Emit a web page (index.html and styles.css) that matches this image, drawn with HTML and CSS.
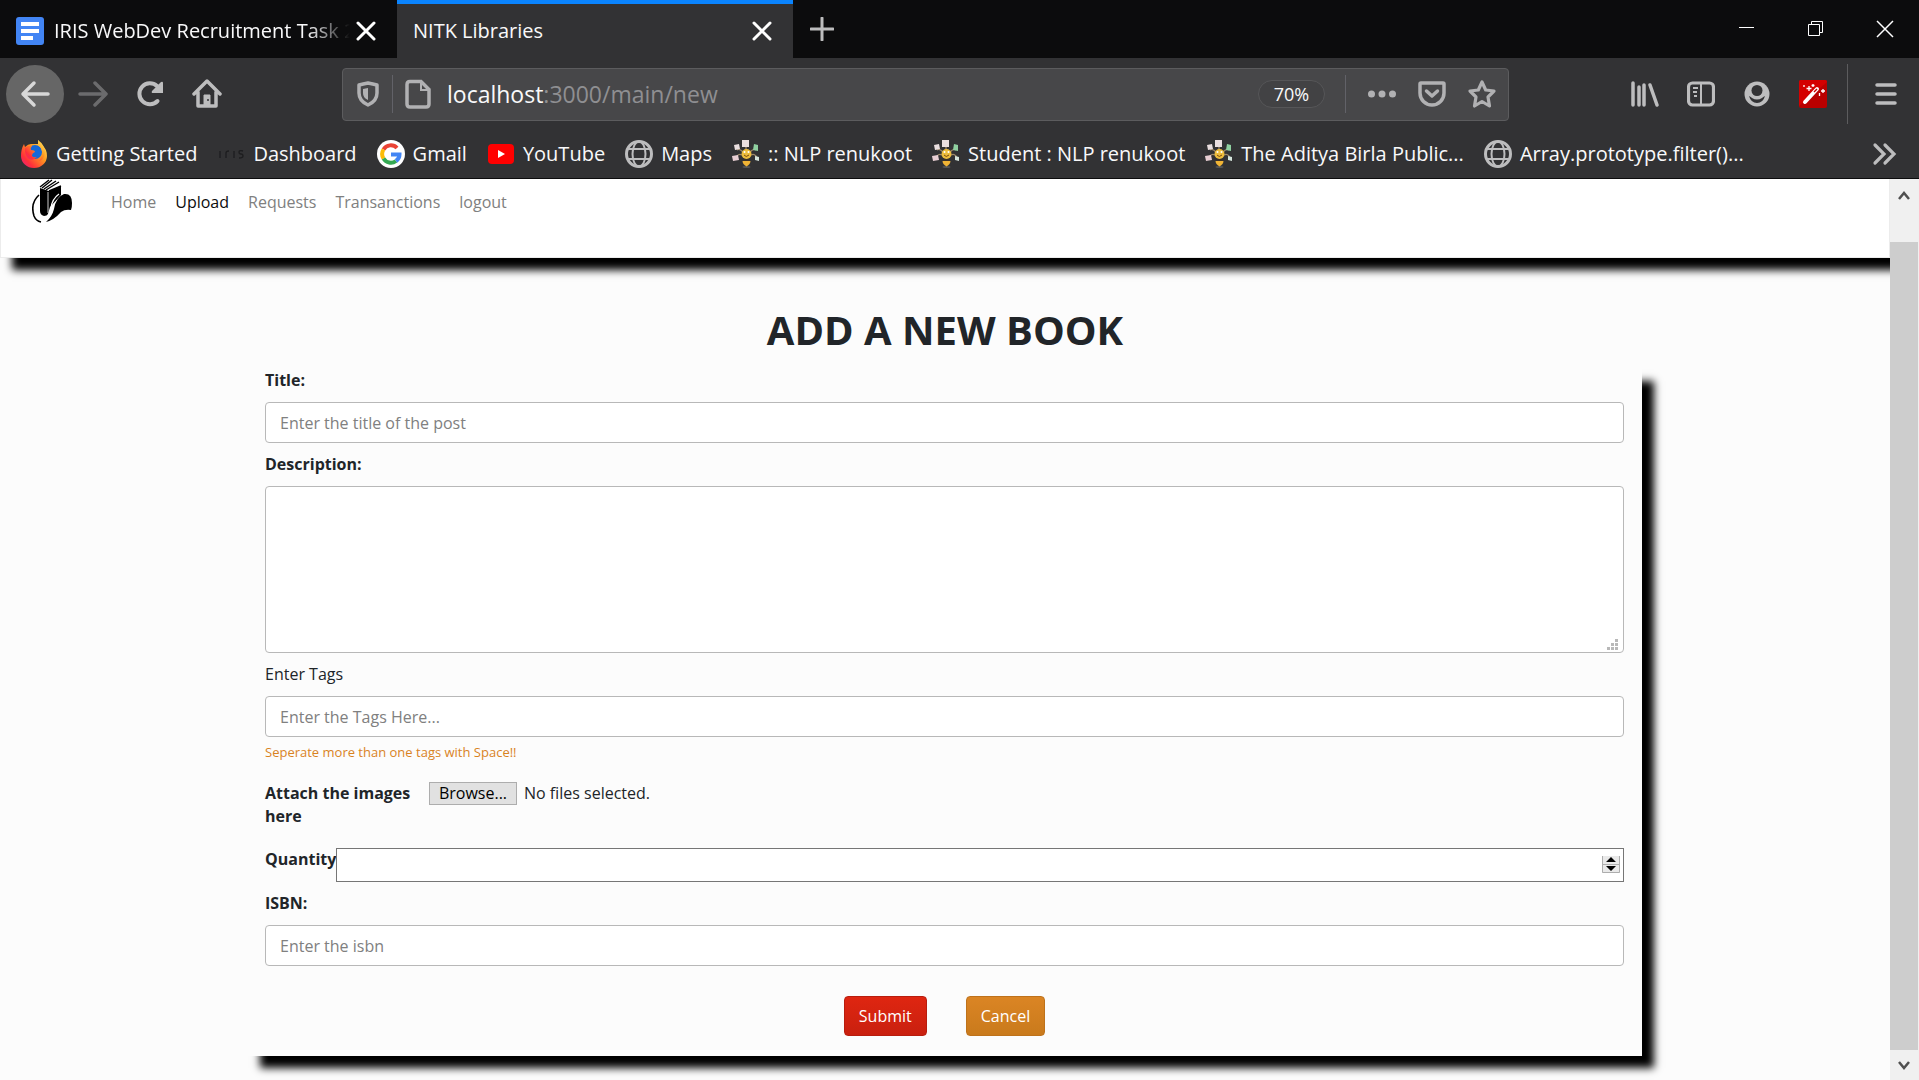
FILE: index.html
```html
<!DOCTYPE html>
<html lang="en">
<head>
<meta charset="utf-8">
<title>NITK Libraries</title>
<link rel="stylesheet" href="styles.css">
</head>
<body>
<svg class="defs" aria-hidden="true">
  <symbol id="i-close" viewBox="0 0 20 20"><path d="M2 2l16 16M18 2L2 18" stroke="#fff" stroke-width="3" stroke-linecap="round"/></symbol>
  <symbol id="i-globe" viewBox="0 0 28 28"><g fill="none" stroke="#bdbdbe" stroke-width="2"><circle cx="14" cy="14" r="12.5" stroke-width="3"/><ellipse cx="14" cy="14" rx="6.5" ry="12.5"/><path d="M3 9h22M3 19h22"/></g></symbol>
  <symbol id="i-bee" viewBox="0 0 28 28">
    <ellipse cx="14.500" cy="27" rx="4" ry="1" fill="#555"/>
    <g fill="none" stroke="#a08b6c" stroke-width="1.300"><path d="M11 12Q7 8 5 10M18 12Q22 8 24 10M10 15Q6 13 4 18M19 15Q23 13 25 18M14 10V6"/></g>
    <path d="M10 0h7v7h-7zM2 5l5-1 1 5-5 1z" fill="#eadfe0"/><path d="M22 4l4 1v6l-5-1z" fill="#8fd0a0"/><path d="M0 16l6-1 1 5-6 1z" fill="#e8ced3"/><path d="M23 16l4 1v4l-4-1z" fill="#d5e4dc"/>
    <circle cx="14.500" cy="14" r="5" fill="#eebd3c"/><path d="M12 15q2 3 5 0" stroke="#7a4a10" fill="none"/><circle cx="12.500" cy="12" r="1" fill="#fff"/><circle cx="16.500" cy="12" r="1" fill="#fff"/>
    <path d="M11 19h7v2h-7z" fill="#393028"/><path d="M10.500 21h8q0 3-4 5.500-4-2.500-4-5.500z" fill="#f0b435"/>
  </symbol>
</svg>

<header class="chrome">
  <div class="tabs">
    <div class="tab">
      <svg class="docs" viewBox="0 0 28 28"><rect width="28" height="28" rx="3" fill="#4285f4"/><path d="M5 5h18v4H5zM5 12h18v4H5zM5 19h12v4H5z" fill="#fff"/></svg>
      <span class="tab-title fade">IRIS WebDev Recruitment Task 2</span>
      <button class="tab-close" aria-label="Close tab"><svg viewBox="0 0 20 20"><use href="#i-close"/></svg></button>
    </div>
    <div class="tab active">
      <span class="tab-title">NITK Libraries</span>
      <button class="tab-close" aria-label="Close tab"><svg viewBox="0 0 20 20"><use href="#i-close"/></svg></button>
    </div>
    <button class="new-tab" aria-label="New tab"><svg viewBox="0 0 24 24"><path d="M12 1v22M1 12h22" stroke="#bdbdbe" stroke-width="3" stroke-linecap="round"/></svg></button>
    <div class="window-buttons">
      <button aria-label="Minimize"><svg viewBox="0 0 18 18"><path d="M1 7.500h15" stroke="#fff"/></svg></button>
      <button aria-label="Restore"><svg viewBox="0 0 18 18"><path d="M1.500 4.500h11v11h-11zM4.500 4V1.500h11v11H13" stroke="#fff" fill="none"/></svg></button>
      <button aria-label="Close window"><svg viewBox="0 0 18 18"><path d="M1 1l16 16M17 1L1 17" stroke="#fff" stroke-width="1.500"/></svg></button>
    </div>
  </div>

  <div class="toolbar">
    <div class="nav-buttons">
      <button class="back" aria-label="Back"><svg viewBox="0 0 30 30"><path d="M28 15H3M14 4L3 15l11 11" fill="none" stroke="#d8d8d8" stroke-width="3.500" stroke-linecap="round" stroke-linejoin="round"/></svg></button>
      <button aria-label="Forward"><svg viewBox="0 0 30 30"><path d="M2 15h26M17 4l11 11-11 11" fill="none" stroke="#6b6b6d" stroke-width="3.500" stroke-linecap="round" stroke-linejoin="round"/></svg></button>
      <button aria-label="Reload"><svg viewBox="0 0 30 30"><path d="M22.500 22A10.500 10.500 0 1 1 22 7l3 3" fill="none" stroke="#bdbdbe" stroke-width="4" stroke-linecap="round"/><path d="M26 3q2-1 2 1v10H18q-2 0-1-2z" fill="#bdbdbe"/></svg></button>
      <button aria-label="Home"><svg viewBox="0 0 30 30"><path d="M2 15L15 2l13 13M6 13v14h18V13" fill="none" stroke="#bdbdbe" stroke-width="3.500" stroke-linecap="round" stroke-linejoin="round"/><path d="M12 27V16h6v11z" fill="#bdbdbe" stroke="#bdbdbe"/><circle cx="16" cy="21" r="1" fill="#323234"/></svg></button>
    </div>
    <div class="urlbar">
      <svg class="shield" viewBox="0 0 24 28"><path d="M12 3q5 1 9 2v8q0 8-9 12-9-4-9-12V5q4-1 9-2z" fill="none" stroke="#b1b1b3" stroke-width="3.500" stroke-linejoin="round"/><path d="M12 8v12q-5-2-5-7V9z" fill="#b1b1b3"/></svg>
      <span class="url-rule"></span>
      <svg class="page-icon" viewBox="0 0 26 30"><path d="M5 2.500h11l8 8V25q0 3-3 3H5q-3 0-3-3V5.500q0-3 3-3z" fill="none" stroke="#b1b1b3" stroke-width="3.500"/><path d="M16 3v8h8" fill="none" stroke="#b1b1b3" stroke-width="2"/></svg>
      <div class="url"><b>localhost</b>:3000/main/new</div>
      <button class="zoom">70%</button>
      <span class="url-rule"></span>
      <div class="url-actions">
        <button aria-label="Page actions"><svg viewBox="0 0 30 30"><g fill="#b1b1b3"><circle cx="4.500" cy="15" r="3.500"/><circle cx="15" cy="15" r="3.500"/><circle cx="25.500" cy="15" r="3.500"/></g></svg></button>
        <button aria-label="Save to Pocket"><svg viewBox="0 0 30 30"><path d="M4 4h22q1 0 1 1v9a12 12 0 0 1-24 0V5q0-1 1-1zM9.500 12l5.500 5 5.500-5" fill="none" stroke="#b1b1b3" stroke-width="3.500" stroke-linecap="round" stroke-linejoin="round"/></svg></button>
        <button aria-label="Bookmark this page"><svg viewBox="0 0 30 30"><path d="M15 3l3.700 8 8.300 1-6 6 1.500 9-7.500-4.500L7.500 27 9 18l-6-6 8.300-1z" fill="none" stroke="#b1b1b3" stroke-width="3.200" stroke-linejoin="round"/></svg></button>
      </div>
    </div>
    <div class="tools">
      <button aria-label="Library"><svg viewBox="0 0 28 28"><path d="M2 3v22M8 7v18M13 5v20M19 5l7 20" fill="none" stroke="#bdbdbe" stroke-width="3.500" stroke-linecap="round"/></svg></button>
      <button aria-label="Sidebars"><svg viewBox="0 0 28 28"><rect x="1.500" y="3" width="25" height="22" rx="4" fill="none" stroke="#bdbdbe" stroke-width="3.200"/><path d="M14 4v20M6 8h5M6 12h4M7 16h3" stroke="#bdbdbe" stroke-width="2"/></svg></button>
      <button aria-label="Account"><svg viewBox="0 0 28 28"><circle cx="14" cy="14" r="12.500" fill="#bdbdbe"/><circle cx="14" cy="10.500" r="5.500" fill="#323234"/><path d="M6 16q2 1 3 2 5 3 10 0 1-1 3-2-2 7-8 7t-8-7z" fill="#323234"/></svg></button>
      <button aria-label="Magic wand"><svg viewBox="0 0 28 28"><rect width="28" height="28" rx="2" fill="#b90000"/><path d="M2 0h24q2 0 2 2L0 26V2q0-2 2-2z" fill="#d40000"/><path d="M6 22L18 9" stroke="#fff" stroke-width="4" stroke-linecap="round"/><path d="M15 12l3-3" stroke="#c80000" stroke-width="1.500"/><path d="M10 6v5M7.500 8.500h5M14 4v3M12.500 5.500h3M24 9v4M22 11h4M20.500 13v3M5 5v2" stroke="#fff" stroke-width="1.300"/></svg></button>
    </div>
    <div class="menu"><button aria-label="Open menu"><svg viewBox="0 0 28 28"><path d="M5 5h18M5 14h18M5 23h18" stroke="#bdbdbe" stroke-width="3.500" stroke-linecap="round"/></svg></button></div>
  </div>

  <nav class="bookmarks" aria-label="Bookmarks">
    <a href="#"><svg viewBox="0 0 28 28"><defs><linearGradient id="fx" x1="1" y1="0" x2="0" y2="1"><stop offset="0" stop-color="#fff36b"/><stop offset=".4" stop-color="#ff9a1f"/><stop offset=".75" stop-color="#ff2f3a"/><stop offset="1" stop-color="#e0208a"/></linearGradient></defs><path d="M18 0q1 3 4 5 5 4 5 11a13 12 0 0 1-26 0q0-7 3-12l1 3q3-3 6-3h7z" fill="url(#fx)"/><circle cx="15" cy="12" r="7" fill="#1568d8"/><path d="M5 8q4-3 7-2-2 2-1 4 4 0 4 2-3 1-3 4 2 2 5 1-4 4-8 2-5-4-4-11zM18 0q7 5 7 13-1 7-6 8 4-5 3-10-1-4-4-6z" fill="url(#fx)"/></svg>Getting Started</a>
    <a href="#"><svg viewBox="0 0 28 28"><path d="M3 11v7M9 18v-5q0-2 3-2M17 11v7M26 11q-4-1-4 1t2 2 2 2-4 2" fill="none" stroke="#1d1d1f" stroke-width="1.300"/></svg>Dashboard</a>
    <a href="#"><svg viewBox="0 0 28 28"><circle cx="14" cy="14" r="14" fill="#fff"/><g fill="none" stroke-width="4"><path d="M6.500 9.500A8.500 8.500 0 0 1 20 8" stroke="#ea4335"/><path d="M6.500 18.500a8.500 8.500 0 0 1 0-9" stroke="#fbbc05"/><path d="M6.500 18.500A8.500 8.500 0 0 0 19 21" stroke="#34a853"/><path d="M14 14.500h8.500q0 4-3.500 6.500" stroke="#4285f4"/></g></svg>Gmail</a>
    <a href="#"><svg viewBox="0 0 28 28"><rect x="1" y="4" width="26" height="20" rx="4" fill="#f00"/><path d="M11 10l7 4-7 4z" fill="#fff"/></svg>YouTube</a>
    <a href="#"><svg viewBox="0 0 28 28"><use href="#i-globe"/></svg>Maps</a>
    <a href="#"><svg viewBox="0 0 28 28"><use href="#i-bee"/></svg>:: NLP renukoot</a>
    <a href="#"><svg viewBox="0 0 28 28"><use href="#i-bee"/></svg>Student : NLP renukoot</a>
    <a href="#"><svg viewBox="0 0 28 28"><use href="#i-bee"/></svg>The Aditya Birla Public...</a>
    <a href="#"><svg viewBox="0 0 28 28"><use href="#i-globe"/></svg>Array.prototype.filter()...</a>
    <button class="more" aria-label="More bookmarks"><svg viewBox="0 0 28 28"><path d="M4 5l9 9-9 9M14 5l9 9-9 9" fill="none" stroke="#bdbdbe" stroke-width="3.200" stroke-linecap="round"/></svg></button>
  </nav>
</header>

<div class="viewport">
  <main class="page">
    <nav class="site-nav">
      <a class="brand" href="#" aria-label="NITK Libraries"><svg viewBox="0 0 40 44"><path d="M8 9v23q0 4 4 5 3 0 4-2l2-7 11-12V7L17 12z" fill="#000"/><path d="M8 8l11-7 10 3v3L17 12z" fill="#fff"/><path d="M8 8l9-7M10 9l10-8M12 10l12-8M14 11L27 3M17 12l12-5" fill="none" stroke="#000" stroke-width="1.400"/><path d="M16 13v21" stroke="#fff" stroke-width=".8"/><path d="M14 43q6-5 8-13 2-12 10-15 8-1 8 9 0 5-1 7-6-1-10 2-7 8-15 10z" fill="#000"/><path d="M7 16Q-2 24 2 37q2 5 7 6" fill="none" stroke="#000" stroke-width="1.600"/><path d="M27 15q-7 5-8 14-1 5-3 8" fill="none" stroke="#fff" stroke-width="1.200"/></svg></a>
      <a href="#">Home</a>
      <a class="current" href="#">Upload</a>
      <a href="#">Requests</a>
      <a href="#">Transanctions</a>
      <a href="#">logout</a>
    </nav>

    <h1>ADD A NEW BOOK</h1>

    <form class="card" onsubmit="return false">
      <label class="strong" for="title">Title:</label>
      <input class="field" id="title" type="text" placeholder="Enter the title of the post">
      <label class="strong" for="description">Description:</label>
      <div class="area">
        <textarea class="field" id="description"></textarea>
        <svg class="grip" viewBox="0 0 11 11"><path d="M8 0h3v3H8zM4 4h3v3H4zM8 4h3v3H8zM0 8h3v3H0zM4 8h3v3H4zM8 8h3v3H8z" fill="#b8b8b8"/></svg>
      </div>
      <label for="tags">Enter Tags</label>
      <input class="field" id="tags" type="text" placeholder="Enter the Tags Here...">
      <small>Seperate more than one tags with Space!!</small>
      <div class="attach">
        <label class="strong" for="images">Attach the images here</label>
        <div class="picker">
          <span class="browse">Browse...</span>
          <span>No files selected.</span>
          <input id="images" type="file" multiple>
        </div>
      </div>
      <div class="quantity">
        <label class="strong" for="quantity">Quantity</label>
        <div class="number">
          <input id="quantity" type="number">
          <svg class="spinner" viewBox="0 0 18 17"><rect width="18" height="17" fill="#e9e9e9"/><path d="M.500 0v16.500h17V0M0 8.500h18" fill="none" stroke="#adadad"/><path d="M4 6l5-5 5 5zM4 10h10l-5 5z" fill="#000"/></svg>
        </div>
      </div>
      <label class="strong" for="isbn">ISBN:</label>
      <input class="field" id="isbn" type="text" placeholder="Enter the isbn">
      <div class="actions">
        <button class="btn submit" type="submit">Submit</button>
        <button class="btn cancel" type="button">Cancel</button>
      </div>
    </form>
  </main>

  <div class="scrollbar" aria-hidden="true">
    <svg viewBox="0 0 14 14"><path d="M2 10l5-6 5 6" fill="none" stroke="#505050" stroke-width="2.500"/></svg>
    <div class="thumb"></div>
    <svg viewBox="0 0 14 14"><path d="M2 4l5 6 5-6" fill="none" stroke="#505050" stroke-width="2.500"/></svg>
  </div>
</div>
</body>
</html>
```
FILE: styles.css
```css
* { box-sizing: border-box; }
body {
  margin: 0;
  min-height: 100vh;
  display: flex;
  flex-direction: column;
  background: #fcfcfc;
  color: #212529;
  font: 16px/23px "Open Sans", "Noto Sans", sans-serif;
}
button { padding: 0; border: 0; background: none; font: inherit; color: inherit; }
a { color: inherit; text-decoration: none; }
svg { display: block; flex: none; }
.defs { display: none; }

/* Browser window */
.chrome {
  background: #323234;
  border-bottom: 1px solid #0c0c0d;
  color: #f9f9fa;
  font: 20px/28px "Open Sans", "Noto Sans", sans-serif;
}
.tabs { display: flex; height: 58px; background: #0c0c0d; }
.tab {
  display: flex;
  align-items: center;
  width: 397px;
  padding: 4px 21px 0 16px;
}
.tab.active { width: 396px; background: #323234; border-top: 4px solid #0a84ff; padding-top: 0; }
.docs { width: 28px; height: 28px; margin-right: 10px; }
.tab-title { flex: 1; min-width: 0; white-space: nowrap; }
.tab-title.fade { -webkit-mask-image: linear-gradient(90deg, #000 84%, transparent 98%); mask-image: linear-gradient(90deg, #000 84%, transparent 98%); }
.tab-close svg { width: 20px; height: 20px; }
.new-tab { width: 57px; }
.new-tab svg { width: 24px; height: 24px; margin: 0 auto; }
.window-buttons { display: flex; margin-left: auto; }
.window-buttons button { width: 69px; }
.window-buttons svg { width: 18px; height: 18px; margin: 0 auto; }

.toolbar { display: flex; align-items: center; height: 72px; }
.nav-buttons { display: flex; align-items: center; width: 342px; padding-left: 6px; }
.nav-buttons button { width: 57px; display: grid; place-items: center; }
.nav-buttons svg { width: 30px; height: 30px; }
.nav-buttons .back { width: 58px; height: 58px; border-radius: 50%; background: #666; }
.urlbar {
  flex: 1;
  display: flex;
  align-items: center;
  height: 53px;
  padding: 0 11px 0 13px;
  border: 1px solid #5c5c5e;
  border-radius: 4px;
  background: #474749;
}
.shield { width: 24px; height: 28px; }
.url-rule { width: 1px; height: 38px; margin: 0 12px; background: #626268; }
.page-icon { width: 26px; height: 30px; margin-right: 16px; }
.url { flex: 1; color: #8f8f92; font-size: 23px; }
.url b { font-weight: 400; color: #f9f9fa; }
.zoom { width: 67px; height: 28px; margin-right: 8px; border: 1px solid #565658; border-radius: 14px; background: #424244; font-size: 18px; line-height: 26px; }
.url-actions { display: flex; gap: 20px; padding-left: 9px; }
.url-actions svg { width: 30px; height: 30px; }
.tools { display: flex; gap: 28px; width: 338px; padding-left: 122px; }
.tools svg, .menu svg { width: 28px; height: 28px; }
.menu { display: flex; align-items: center; width: 72px; height: 60px; padding-left: 24px; border-left: 1px solid #5c5c5e; }

.bookmarks { display: flex; align-items: center; gap: 20px; height: 48px; padding: 0 20px; white-space: nowrap; }
.bookmarks a { display: flex; align-items: center; gap: 8px; }
.bookmarks svg { width: 28px; height: 28px; }
.more { margin-left: auto; }

/* Web page */
.viewport { flex: 1; display: flex; }
.page { flex: 1; min-width: 0; overflow: hidden; }
.site-nav {
  display: flex;
  align-items: flex-start;
  gap: 19px;
  height: 79px;
  padding: 0 31px;
  border: 1px solid #ececec;
  border-top: 0;
  background: #fff;
  box-shadow: 12px 12px 8px #000;
  color: #808080;
}
.site-nav a { padding-top: 12px; }
.site-nav .brand { width: 60px; padding: 0; }
.brand svg { width: 40px; height: 44px; }
.site-nav .current { color: #0c0c0d; }
h1 { margin: 47px 0 14px; font-size: 40px; line-height: 50px; text-align: center; }

.card {
  width: 74%;
  max-width: 1394px;
  margin: 0 auto 24px;
  padding: 0 18px 20px 17px;
  background: #fcfcfc;
  box-shadow: 12px 12px 8px #000;
}
.card label { display: block; }
.strong { font-weight: 700; }
.field {
  display: block;
  width: 100%;
  height: 41px;
  margin: 10px 0;
  padding: 0 14px;
  border: 1px solid #b8b8b8;
  border-radius: 4px;
  background: #fff;
  font: inherit;
}
.field::placeholder { color: #808080; opacity: 1; }
.area { position: relative; }
.area .field { height: 167px; padding: 8px 14px; resize: none; }
.grip { position: absolute; right: 6px; bottom: 3px; width: 11px; height: 11px; }
.card small { display: block; margin: -4px 0 20px; font-size: 13px; line-height: 19px; color: #d9831f; }
.attach { display: flex; margin-bottom: 20px; }
.attach label { width: 164px; padding-right: 16px; }
.picker { position: relative; display: flex; align-items: center; gap: 7px; height: 23px; }
.picker input { position: absolute; inset: 0; width: 100%; opacity: 0; }
.browse { width: 88px; border: 1px solid #adadad; background: #e1e1e1; color: #000; line-height: 21px; text-align: center; }
.quantity { display: flex; margin-bottom: 10px; }
.number { position: relative; flex: 1; }
.number input { display: block; width: 100%; height: 34px; padding: 0 26px 0 4px; border: 1px solid #767676; background: #fff; font: inherit; appearance: textfield; }
.number input::-webkit-inner-spin-button { appearance: none; }
.spinner { position: absolute; right: 4px; top: 8px; width: 18px; height: 17px; }
.actions { display: flex; justify-content: center; gap: 39px; padding-top: 20px; }
.btn { height: 40px; padding: 0 14px; border: 1px solid; border-radius: 4px; color: #fff; }
.submit { background: linear-gradient(#df2611, #c9200f); border-color: #b81d0e; }
.cancel { background: linear-gradient(#db8524, #c97a1c); border-color: #be721b; }

.scrollbar { display: flex; flex-direction: column; align-items: center; justify-content: space-between; width: 29px; padding: 9px 1px 7px 0; background: #f0f0f0; }
.scrollbar svg { width: 14px; height: 16px; }
.thumb { flex: 1; align-self: stretch; margin: 38px 0 7px; background: #cdcdcd; }
```
